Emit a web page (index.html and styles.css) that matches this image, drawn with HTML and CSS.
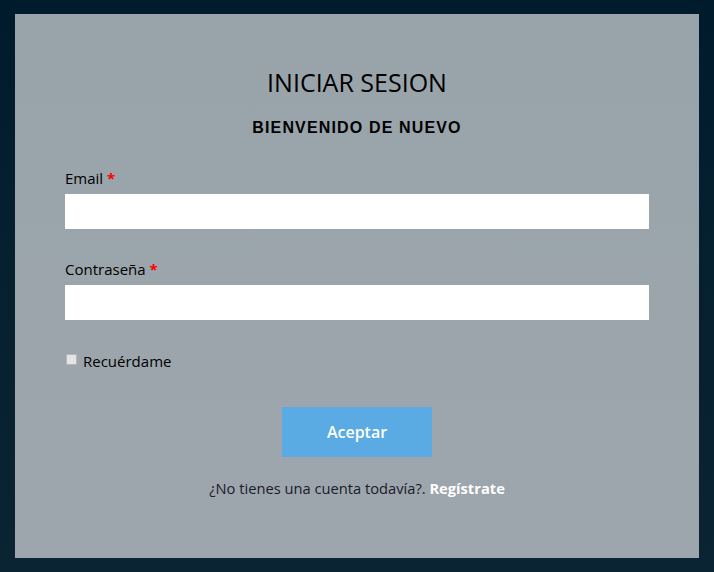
FILE: index.html
```html
<!DOCTYPE html>
<html lang="es">
<head>
<meta charset="utf-8">
<title>Iniciar sesión</title>
<link rel="stylesheet" href="styles.css">
</head>
<body>
<main class="card">
  <h1 class="title">INICIAR SESION</h1>
  <h2 class="subtitle">BIENVENIDO DE NUEVO</h2>
  <form class="form">
    <label class="label" for="email">Email <span class="req">*</span></label>
    <input class="field" id="email" type="email">
    <label class="label label-gap" for="pass">Contraseña <span class="req">*</span></label>
    <input class="field" id="pass" type="password">
    <label class="remember"><input class="check" type="checkbox"> Recuérdame</label>
    <div class="actions"><button class="btn" type="button">Aceptar</button></div>
    <p class="footer">¿No tienes una cuenta todavía?. <a class="link" href="#">Regístrate</a></p>
  </form>
</main>
</body>
</html>
```
FILE: styles.css
```css
html, body { height: 100%; }
body {
  margin: 0;
  padding: 14px 15px;
  box-sizing: border-box;
  background: linear-gradient(to bottom, #001c2c 0%, #0b2433 100%);
  font-family: "Open Sans", "DejaVu Sans", sans-serif;
}
.card {
  width: 684px;
  height: 544px;
  box-sizing: border-box;
  background: linear-gradient(to bottom, #99a4aa 0%, #9da6ad 100%);
  padding: 52px 50px 0;
}
.title {
  margin: 0;
  text-align: center;
  font-weight: 400;
  font-size: 25px;
  line-height: 32px;
  color: #000;
}
.subtitle {
  margin: 20px 0 0;
  text-align: center;
  font-family: "Liberation Sans", Arial, sans-serif;
  font-weight: 700;
  font-size: 16px;
  letter-spacing: 1.15px;
  line-height: 20px;
  color: #000;
}
.form { display: flex; flex-direction: column; margin-top: 30px; }
.label {
  font-size: 15px;
  line-height: 20px;
  color: #000;
  margin-bottom: 6px;
}
.label-gap { margin-top: 30px; }
.req { color: #f00; font-weight: 700; }
.field {
  display: block;
  width: 100%;
  height: 35px;
  box-sizing: border-box;
  border: 0;
  background: #fff;
  margin: 0;
  padding: 0 10px;
}
.remember {
  margin-top: 31px;
  font-size: 15px;
  line-height: 20px;
  color: #000;
  display: flex;
  align-items: center;
  gap: 6px;
}
.check {
  appearance: none;
  -webkit-appearance: none;
  margin: 0 0 0 1px;
  width: 11px;
  height: 11px;
  box-sizing: border-box;
  background: #e4e4e4;
  border: 1px solid #b6b6b6;
  border-radius: 1px;
  position: relative;
  top: -2px;
}
.actions { display: flex; justify-content: center; margin-top: 36px; }
.btn {
  width: 150px;
  height: 50px;
  border: 0;
  background: #5aabe3;
  color: #fff;
  font-family: "Open Sans", sans-serif;
  font-weight: 600;
  font-size: 16px;
}
.footer {
  margin: 21px 0 0;
  text-align: center;
  font-size: 14.7px;
  line-height: 20px;
  color: #1c1a2a;
}
.link { color: #fff; font-weight: 700; text-decoration: none; }
```
